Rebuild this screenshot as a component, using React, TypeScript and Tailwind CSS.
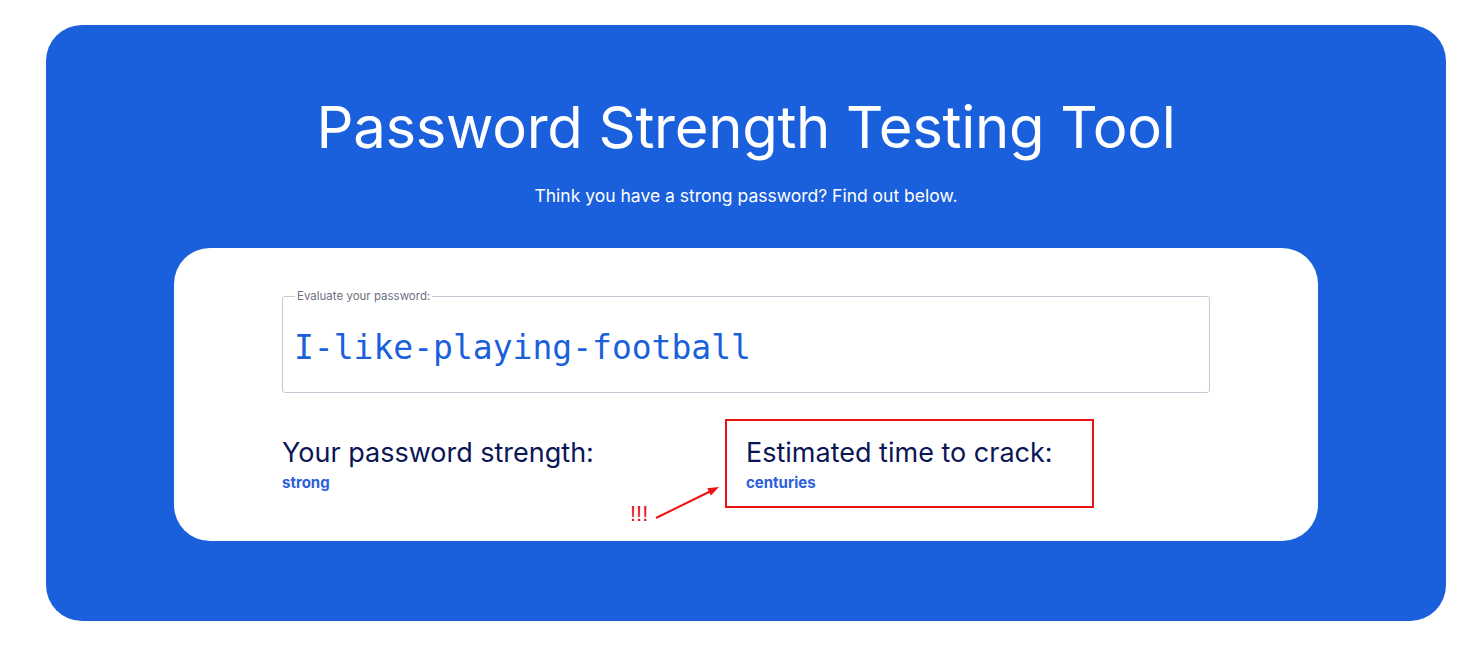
export default function App() {
  return (
    <div className="min-h-screen bg-white pl-[46px] pr-[37px] pt-[25px] pb-[30px] font-['Inter',sans-serif]">
      <div className="bg-[#1a5fdb] rounded-[36px] h-[596px] flex flex-col items-center pt-[66px]">
        <h1 className="text-white text-[58px] leading-[72px] font-normal tracking-[-0.3px]">
          Password Strength Testing Tool
        </h1>
        <p className="text-white text-[17.5px] mt-[20px]">
          Think you have a strong password? Find out below.
        </p>

        <div className="bg-white rounded-[36px] w-[1144px] h-[293px] mt-[39px] pt-[40px] px-[108px]">
          <fieldset className="border border-[#c4c9d6] rounded-[3px] h-[105px] px-[11px]">
            <legend className="text-[11.5px] text-[#6b7280] px-[2px] ml-[1px]">Evaluate your password:</legend>
            <div className="font-['DejaVu_Sans_Mono',monospace] text-[33px] leading-[40px] text-[#1a5fdb] pt-[22px]">
              I-like-playing-football
            </div>
          </fieldset>

          <div className="grid grid-cols-2 mt-[44px]">
            <div>
              <div className="text-[27px] text-[#0b1657] leading-[32px]">Your password strength:</div>
              <div className="text-[15px] font-bold text-[#2a5fdd] mt-[3px]">strong</div>
            </div>
            <div className="relative">
              <div className="text-[27px] text-[#0b1657] leading-[32px]">Estimated time to crack:</div>
              <div className="text-[15px] font-bold text-[#2a5fdd] mt-[3px]">centuries</div>

              <div className="absolute left-[-21px] top-[-18px] w-[369px] h-[89px] border-2 border-[#ee1111] pointer-events-none" />
              <div className="absolute left-[-116px] top-[65px] text-[#ee1111] text-[22px] leading-[24px] font-['Liberation_Sans',sans-serif]">
                !!!
              </div>
              <svg className="absolute left-[-95px] top-[46px]" width="76" height="40" viewBox="0 0 76 40">
                <line x1="5" y1="35" x2="62" y2="7" stroke="#ee1111" strokeWidth="2" />
                <polygon points="68,4 59.9,12.4 56.3,5.3" fill="#ee1111" />
              </svg>
            </div>
          </div>
        </div>
      </div>
    </div>
  )
}
